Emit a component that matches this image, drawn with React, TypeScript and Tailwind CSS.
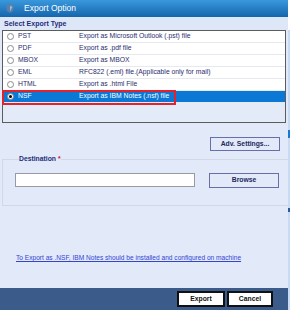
import React from 'react';

const rows = [
  { name: 'PST', desc: 'Export as Microsoft Outlook (.pst) file' },
  { name: 'PDF', desc: 'Export as .pdf file' },
  { name: 'MBOX', desc: 'Export as MBOX' },
  { name: 'EML', desc: 'RFC822 (.eml) file.(Applicable only for mail)' },
  { name: 'HTML', desc: 'Export as .html File' },
  { name: 'NSF', desc: 'Export as IBM Notes (.nsf) file' },
];

function Radio({ checked }: { checked: boolean }) {
  return (
    <span className="w-[7px] h-[7px] rounded-full border border-[#8a8a8a] bg-white flex items-center justify-center shrink-0">
      {checked && <span className="w-[3px] h-[3px] rounded-full bg-black" />}
    </span>
  );
}

export default function App() {
  const selected = 'NSF';
  return (
    <div className="w-[290px] h-[310px] flex overflow-hidden" style={{ fontFamily: '"Liberation Sans", Arial, sans-serif' }}>
      <div className="w-[288px] h-[310px] bg-[#e2eafa] flex flex-col">
        {/* Title bar */}
        <div className="h-[17px] bg-gradient-to-b from-[#3a98dd] to-[#1466ab] flex items-center pl-[6px] gap-[10px]">
          <svg width="8" height="9" viewBox="0 0 8 9">
            <path d="M4 0 L8 2 L7 7 L4 9 L1 7 L0 2 Z" fill="#5b7fa8" />
            <path d="M4 1.5 L6.5 3 L4 7.5 Z" fill="#9fb7d4" />
          </svg>
          <span className="text-white text-[8.5px] leading-none">Export Option</span>
        </div>

        {/* Header */}
        <div className="h-[13px] pl-[4px] flex items-center bg-[#dde7f8]">
          <span className="text-[7px] font-bold text-[#262d78] leading-none">Select Export Type</span>
        </div>

        {/* List */}
        <div className="relative ml-[2px] w-[284px] h-[93px] border border-[#5c5c5c] bg-[#e3ebf9]">
          {rows.map((r) => {
            const on = r.name === selected;
            return (
              <div
                key={r.name}
                className={`h-[12px] flex items-center border-b border-[#e6e9f0] text-[6.8px] leading-none ${
                  on ? 'bg-[#0a78d4] text-white' : 'bg-white text-[#2b2d6e]'
                }`}
              >
                <span className="w-[15px] pl-[4px] flex items-center">
                  <Radio checked={on} />
                </span>
                <span className="w-[61px]">{r.name}</span>
                <span>{r.desc}</span>
              </div>
            );
          })}
          {/* highlight annotation */}
          <div className="absolute left-[-1px] top-[59px] w-[174px] h-[15px] border-2 border-[#e3222c]" />
        </div>

        {/* Adv settings */}
        <div className="mt-[14px] flex justify-end pr-[8px]">
          <button className="w-[70px] h-[14px] border border-[#6a6ea6] bg-[#e2eafa] text-[6.8px] font-bold text-[#22285c] leading-none">
            Adv. Settings...
          </button>
        </div>

        {/* Destination */}
        <fieldset className="mt-[5px] ml-[2px] w-[282px] h-[50px] border border-[#d2d8e4] px-[12px]">
          <legend className="ml-[4px] text-[6.8px] font-bold text-[#262d78] leading-none">
            Destination <span className="text-[#d02030]">*</span>
          </legend>
          <div className="mt-[10px] flex items-center">
            <div className="w-[180px] h-[14px] bg-white border border-[#9a9aa6]" />
            <button className="ml-[14px] w-[70px] h-[15px] border border-[#6a6ea6] bg-[#e2eafa] text-[6.8px] font-bold text-[#22285c] leading-none">
              Browse
            </button>
          </div>
        </fieldset>

        {/* Note */}
        <div className="mt-[37px] pl-[16px]">
          <span className="text-[6.6px] text-[#3344d0] underline leading-none">
            To Export as .NSF, IBM Notes should be installed and configured on machine
          </span>
        </div>

        {/* Footer */}
        <div className="mt-auto h-[22px] bg-[#3b5b8b] flex items-center justify-end pr-[15px] gap-[2px]">
          <button className="w-[48px] h-[16px] bg-white border-2 border-[#111] text-[6.8px] font-bold text-[#111] leading-none">
            Export
          </button>
          <button className="w-[46px] h-[16px] bg-white border-2 border-[#111] text-[6.8px] font-bold text-[#111] leading-none">
            Cancel
          </button>
        </div>
      </div>
      <div className="w-[2px] h-[310px] bg-[#c9daf4] flex flex-col">
        <div className="h-[30px] bg-white" />
        <div className="mt-[100px] h-[8px] bg-[#1a78d0]" />
        <div className="mt-[70px] h-[4px] bg-[#2a5a9a]" />
      </div>
    </div>
  );
}
